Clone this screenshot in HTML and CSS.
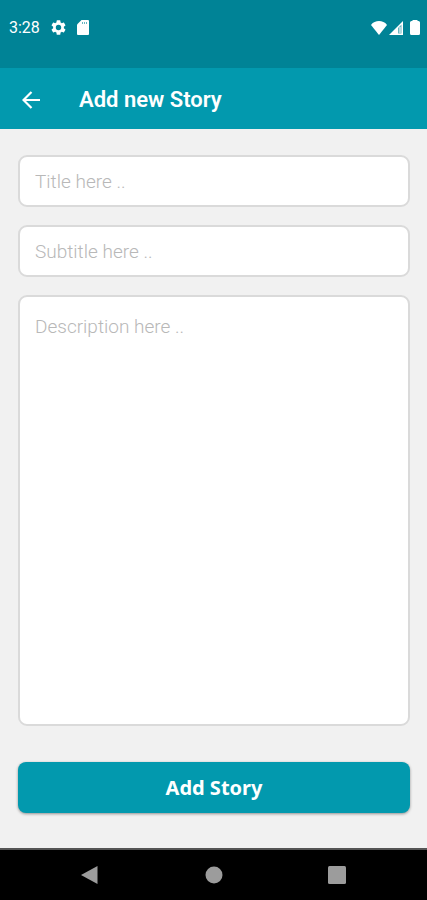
FILE: index.html
```html
<!DOCTYPE html>
<html lang="en">
<head>
<meta charset="utf-8">
<meta name="viewport" content="width=device-width, initial-scale=1">
<title>Add new Story</title>
<link rel="stylesheet" href="styles.css">
</head>
<body>
<div class="status">
  <div class="status-left">
    <span class="clock">3:28</span>
    <svg class="gear" viewBox="2 2 20 20" aria-hidden="true"><path d="M19.14 12.94c.04-.3.06-.61.06-.94 0-.32-.02-.64-.07-.94l2.03-1.58a.49.49 0 0 0 .12-.61l-1.92-3.32a.49.49 0 0 0-.59-.22l-2.39.96a7 7 0 0 0-1.62-.94l-.36-2.54a.48.48 0 0 0-.48-.41h-3.84a.47.47 0 0 0-.47.41l-.36 2.54c-.59.24-1.13.57-1.62.94l-2.39-.96a.48.48 0 0 0-.59.22L2.74 8.87a.47.47 0 0 0 .12.61l2.03 1.58a6 6 0 0 0-.02 1.88l-2.03 1.58a.49.49 0 0 0-.12.61l1.92 3.32c.12.22.37.29.59.22l2.39-.96c.5.38 1.03.7 1.62.94l.36 2.54c.05.24.24.41.48.41h3.84c.24 0 .44-.17.47-.41l.36-2.54c.59-.24 1.13-.56 1.62-.94l2.39.96c.22.08.47 0 .59-.22l1.92-3.32a.47.47 0 0 0-.12-.61zM12 15.6a3.6 3.6 0 1 1 0-7.2 3.6 3.6 0 0 1 0 7.2z"/></svg>
    <svg class="card" viewBox="0 0 12 15" aria-hidden="true"><path d="M4.5 0H11a1 1 0 0 1 1 1v13a1 1 0 0 1-1 1H1a1 1 0 0 1-1-1V4.5z"/><path class="cut" d="M5 2h1v2H5zM7 2h1v2H7zM9 2h1v2H9z"/></svg>
  </div>
  <div class="status-right">
    <svg class="wifi" viewBox="0 0 16 14" aria-hidden="true"><path d="M8 14 0 4C2 1 5 0 8 0s6 1 8 4z"/></svg>
    <svg class="signal" viewBox="0 0 14 14" aria-hidden="true"><path d="M14 0v14H0z"/><path class="cut" d="M9 7 12.500 3.500v9H9z"/><path d="M10.500 6h1v6h-1z"/></svg>
    <svg class="battery" viewBox="0 0 10 15" aria-hidden="true"><path d="M3 0h4l1 1h.5A1.500 1.500 0 0 1 10 2.500v11A1.500 1.500 0 0 1 8.500 15h-7A1.500 1.500 0 0 1 0 13.500v-11A1.500 1.500 0 0 1 1.500 1H2z"/></svg>
  </div>
</div>
<header class="appbar">
  <button class="back" type="button" aria-label="Back">
    <svg viewBox="0 0 18 18" aria-hidden="true"><path d="M18 9H1.500M9.500 1 1.500 9l8 8"/></svg>
  </button>
  <h1>Add new Story</h1>
</header>
<main>
  <form class="story">
    <input class="field" type="text" aria-label="Title" placeholder="Title here ..">
    <input class="field" type="text" aria-label="Subtitle" placeholder="Subtitle here ..">
    <textarea class="field" aria-label="Description" placeholder="Description here .."></textarea>
    <button class="submit" type="submit">Add Story</button>
  </form>
</main>
<nav class="sysnav">
  <button type="button" aria-label="Back"><svg viewBox="0 0 18 18"><path d="M16.500 0v18L0 9z"/></svg></button>
  <button type="button" aria-label="Home"><svg viewBox="0 0 18 18"><circle cx="9" cy="9" r="8.500"/></svg></button>
  <button type="button" aria-label="Recent apps"><svg viewBox="0 0 18 18"><rect width="18" height="18" rx="1.500"/></svg></button>
</nav>
</body>
</html>
```
FILE: styles.css
```css
* { box-sizing: border-box; }

body {
  margin: 0;
  min-height: 100vh;
  display: flex;
  flex-direction: column;
  background: #f1f1f1;
  font-family: Roboto, "Liberation Sans", sans-serif;
}

button {
  border: 0;
  padding: 0;
  background: none;
  font: inherit;
  cursor: pointer;
}

svg { display: block; }

.status {
  display: flex;
  justify-content: space-between;
  height: 68px;
  padding: 18px 7px 0 9px;
  background: #008396;
  color: #fff;
}

.status-left,
.status-right {
  display: flex;
  align-items: center;
  height: 19px;
}

.status svg { fill: #fff; }
.status .cut { fill: #008396; opacity: 0.6; }
.clock { font-size: 16px; line-height: 19px; }
.gear { width: 15px; height: 15px; margin-left: 11px; }
.card { width: 12px; height: 15px; margin-left: 11px; }
.wifi { width: 16px; height: 14px; }
.signal { width: 14px; height: 14px; margin-left: 2px; }
.battery { width: 10px; height: 15px; margin-left: 7px; }

.appbar {
  display: flex;
  align-items: center;
  height: 61px;
  padding: 2px 22px 0;
  background: #0299ae;
  color: #fff;
}

.back svg {
  width: 18px;
  height: 18px;
  fill: none;
  stroke: #fff;
  stroke-width: 2.2;
}

.appbar h1 {
  margin: 0 0 0 39px;
  font-size: 22px;
  font-weight: 600;
  line-height: 28px;
}

main {
  flex: 1;
  display: flex;
  padding: 26px 17px 35px 18px;
}

.story {
  flex: 1;
  display: flex;
  flex-direction: column;
  gap: 18px;
}

.field {
  width: 100%;
  height: 52px;
  margin: 0;
  padding: 0 15px;
  border: 2px solid #dadada;
  border-radius: 9px;
  background: #fff;
  color: #333;
  font-family: Roboto, "Liberation Sans", sans-serif;
  font-size: 19px;
  font-weight: 300;
  line-height: 24px;
}

.field::placeholder { color: #b8b8b8; opacity: 1; }

textarea.field {
  flex: 1;
  padding-top: 18px;
  resize: none;
}

.submit {
  height: 51px;
  margin-top: 18px;
  border-radius: 8px;
  background: #0299ae;
  box-shadow: 0 1px 3px rgba(0, 0, 0, 0.4);
  color: #fff;
  font-family: "Noto Sans", "Open Sans", sans-serif;
  font-size: 20px;
  font-weight: 700;
  line-height: 28px;
}

.sysnav {
  display: flex;
  align-items: center;
  justify-content: space-between;
  height: 52px;
  padding: 0 81px;
  border-top: 2px solid #555;
  background: #000;
}

.sysnav svg { width: 18px; height: 18px; fill: #9c9c9c; }
```
